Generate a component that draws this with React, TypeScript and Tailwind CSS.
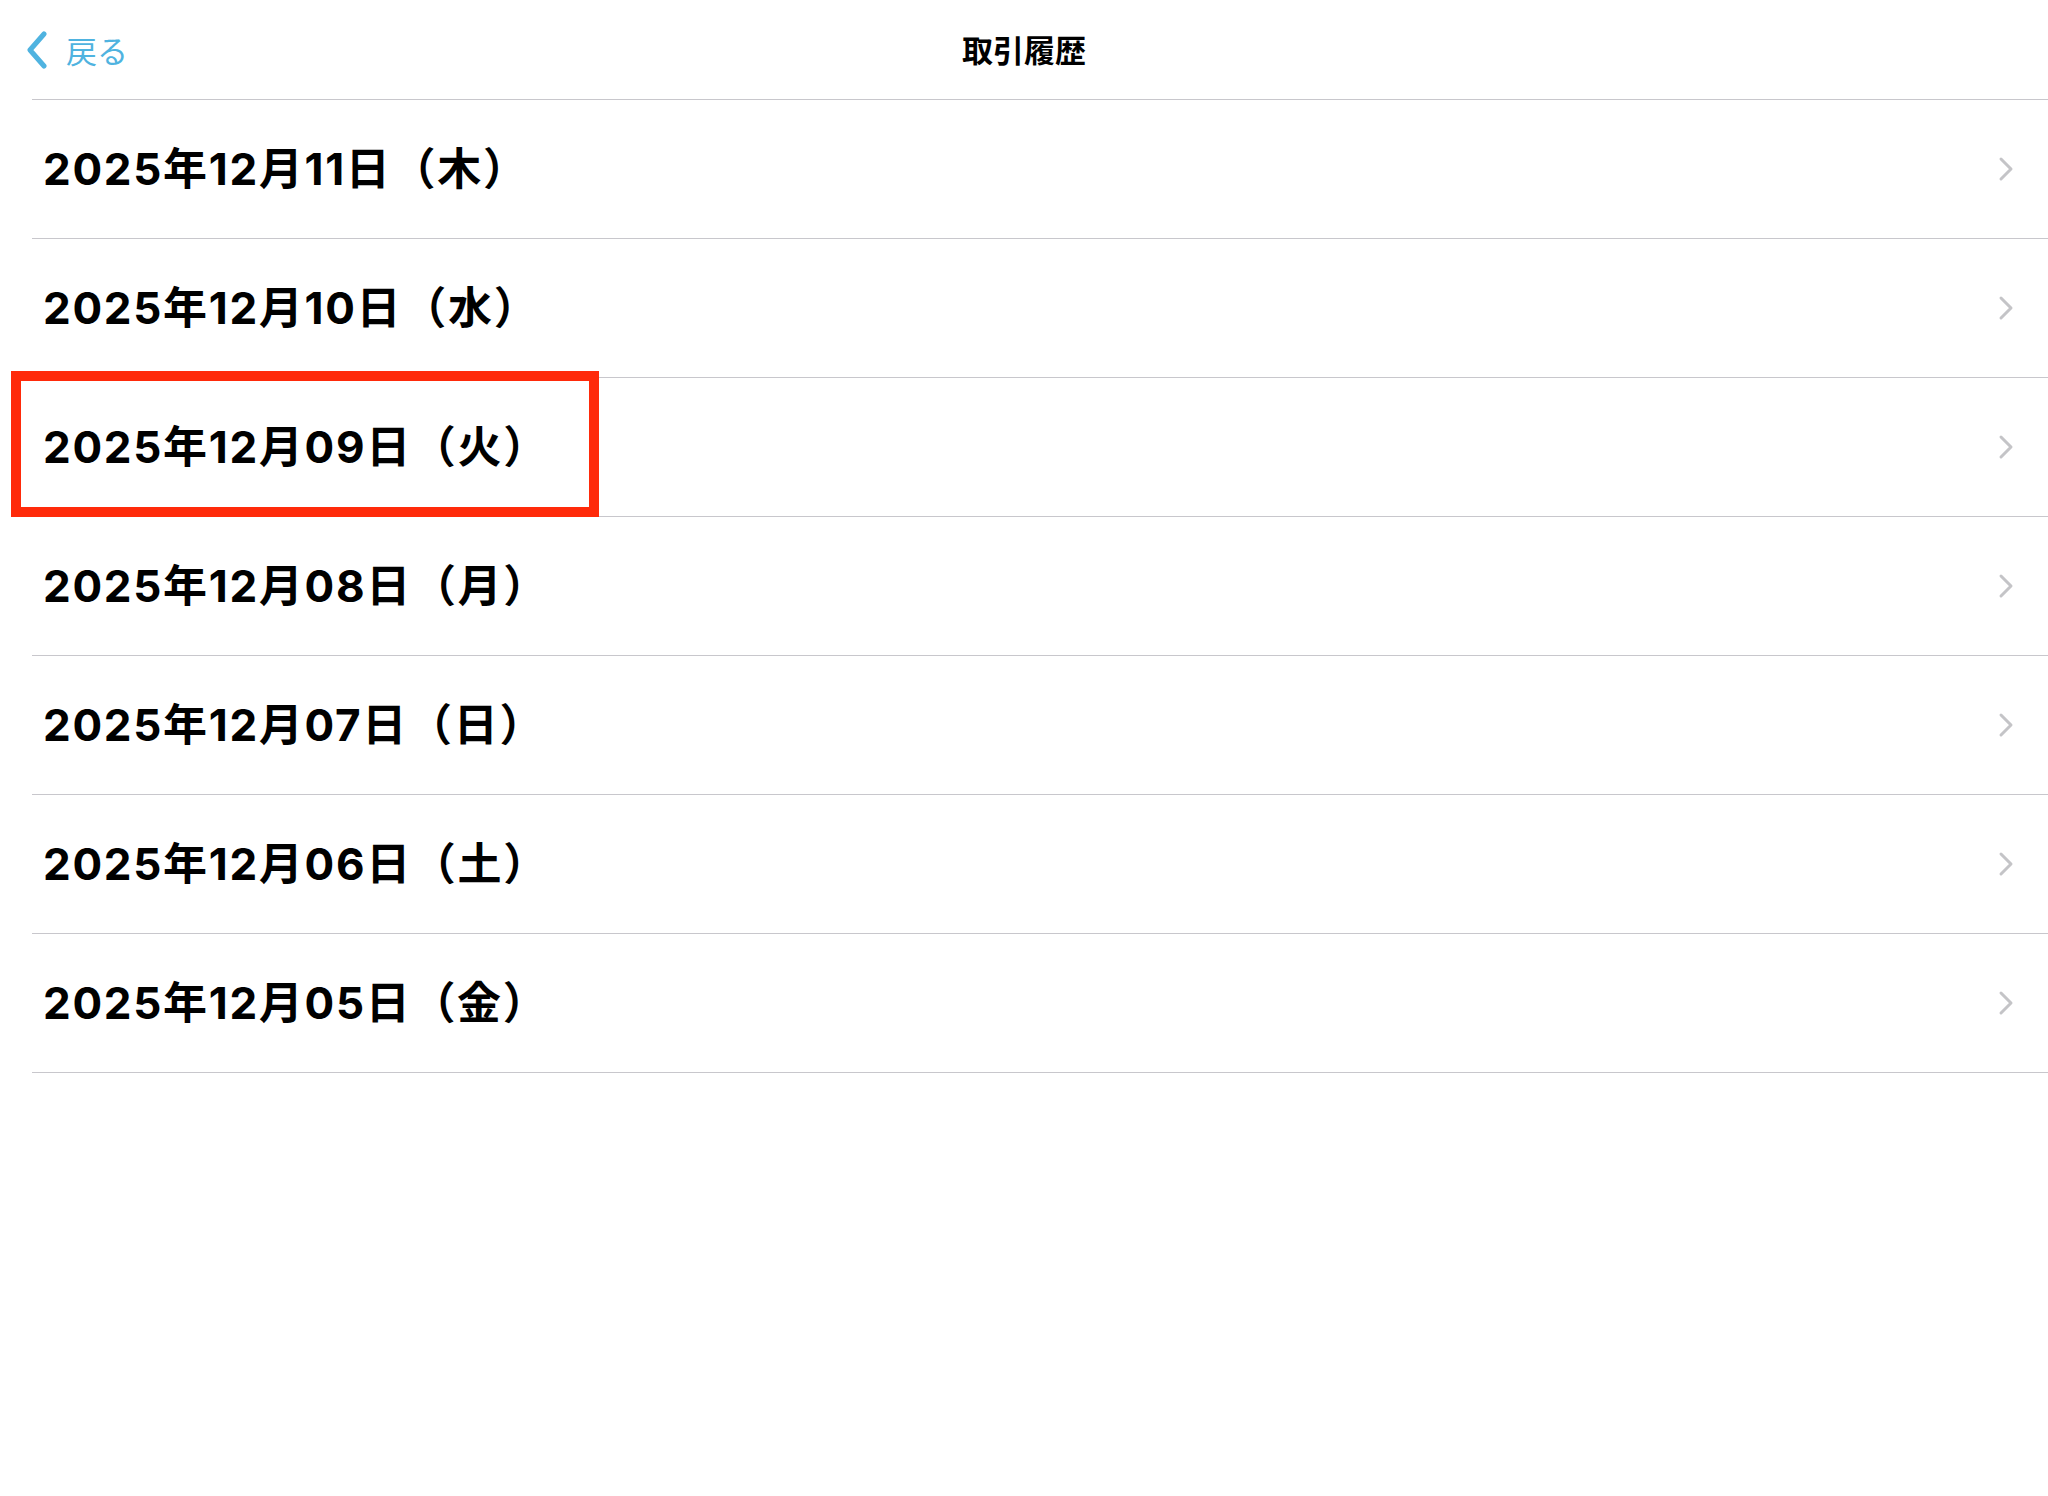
const dates = [
  '2025年12月11日（木）',
  '2025年12月10日（水）',
  '2025年12月09日（火）',
  '2025年12月08日（月）',
  '2025年12月07日（日）',
  '2025年12月06日（土）',
  '2025年12月05日（金）',
];

function BackChevron() {
  return (
    <svg width="24" height="38" viewBox="0 0 24 38" fill="none">
      <path d="M19 3 L5 19 L19 35" stroke="#4fb3e0" strokeWidth="5" strokeLinecap="round" strokeLinejoin="round" />
    </svg>
  );
}

function RowChevron() {
  return (
    <svg width="16" height="26" viewBox="0 0 16 26" fill="none">
      <path d="M3 3 L13 13 L3 23" stroke="#c4c4c7" strokeWidth="3" strokeLinecap="round" strokeLinejoin="round" />
    </svg>
  );
}

export default function App() {
  return (
    <div className="min-h-screen w-full bg-white font-['Noto_Sans_CJK_JP',sans-serif] text-black">
      <header className="relative ml-[32px] flex h-[100px] items-center border-b border-[#c8c7cc]">
        <button type="button" className="-ml-[7px] flex items-center gap-[17px] text-[#4fb3e0]">
          <BackChevron />
          <span className="text-[31px] leading-none">戻る</span>
        </button>
        <h1 className="absolute left-1/2 top-[48px] -translate-x-[calc(50%+16px)] -translate-y-1/2 text-[31px] font-bold leading-none">
          取引履歴
        </h1>
      </header>

      <ul className="ml-[32px]">
        {dates.map((label, index) => (
          <li
            key={label}
            className="relative flex h-[139px] items-center justify-between border-b border-[#c8c7cc] pl-[11px] pr-[34px]"
          >
            <span className="font-['Inter','Noto_Sans_CJK_JP',sans-serif] text-[44px] font-bold leading-none tracking-[1.7px]">
              {label}
            </span>
            <RowChevron />
            {index === 2 ? (
              <div className="pointer-events-none absolute -left-[21px] -top-[7px] h-[146px] w-[588px] border-[10px] border-[#ff2a0a]" />
            ) : null}
          </li>
        ))}
      </ul>
    </div>
  );
}
